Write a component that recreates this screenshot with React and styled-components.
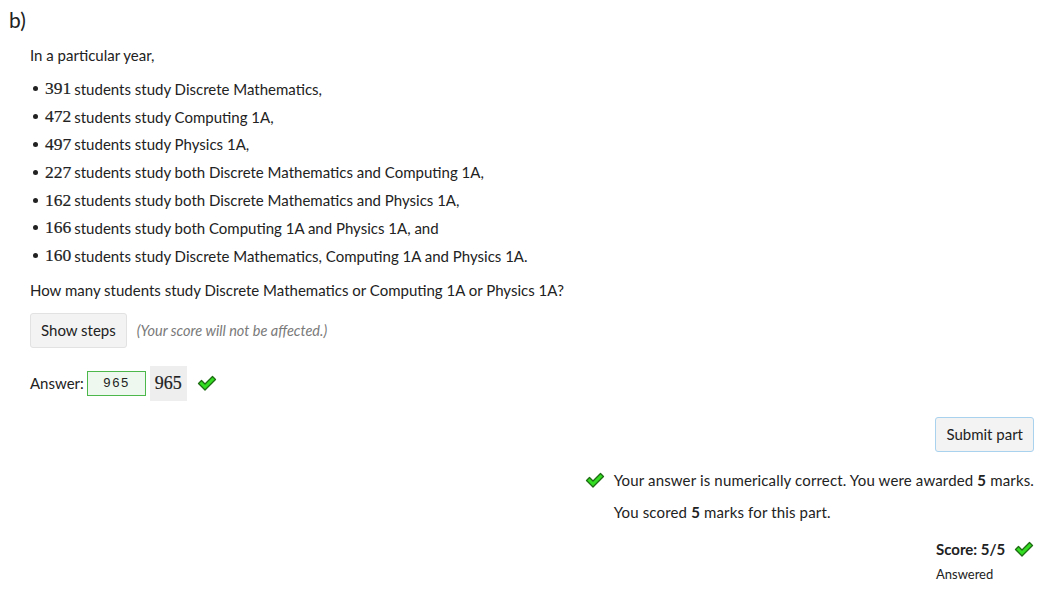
import styled, { createGlobalStyle } from "styled-components";

const GlobalStyle = createGlobalStyle`
  body {
    margin: 0;
    background: #fff;
    font-family: "Lato", "Open Sans", sans-serif;
    color: #222;
  }
`;

const Part = styled.div`
  padding: 6px 12px 0 9px;
  width: 1046px;
  box-sizing: border-box;
`;

const PartTitle = styled.h2`
  margin: 0;
  font-size: 21px;
  font-weight: 400;
  line-height: 28px;
`;

const Content = styled.div`
  padding-left: 21px;
  font-size: 15px;
`;

const Prompt = styled.p`
  margin: 9px 0 8px;
  line-height: 24px;
`;

const List = styled.ul`
  list-style: none;
  margin: 0;
  padding: 0;
`;

const Item = styled.li`
  display: flex;
  align-items: center;
  height: 27.8px;
`;

const Bullet = styled.span`
  width: 5px;
  height: 5px;
  border-radius: 50%;
  background: #222;
  margin: 0 7px 0 3px;
`;

const Num = styled.span`
  font-family: "Liberation Serif", "DejaVu Serif", serif;
  font-size: 17.5px;
  margin-right: 3px;
  -webkit-text-stroke: 0.2px #222;
`;

const Question = styled.p`
  margin: 8px 0 0;
  line-height: 24px;
`;

const StepsRow = styled.div`
  display: flex;
  align-items: center;
  gap: 10px;
  margin-top: 11px;
`;

const Button = styled.button`
  font-family: inherit;
  font-size: 15px;
  color: #222;
  background: #f3f3f3;
  border: 1px solid ${(p) => (p.$primary ? "#a9d2ef" : "#e2e2e2")};
  border-radius: 3px;
  height: 35px;
  padding: 0 10px;
`;

const Note = styled.span`
  font-style: italic;
  font-size: 14.5px;
  color: #7a7a7a;
`;

const AnswerRow = styled.div`
  display: flex;
  align-items: center;
  margin-top: 18px;
`;

const Label = styled.span`
  margin-right: 3px;
`;

const Input = styled.div`
  width: 59px;
  height: 25px;
  box-sizing: border-box;
  border: 1px solid #4cb84c;
  background: #eef8ee;
  font-family: "Liberation Mono", "DejaVu Sans Mono", monospace;
  font-size: 13px;
  letter-spacing: 1px;
  display: flex;
  align-items: center;
  justify-content: center;
`;

const Preview = styled.span`
  margin-left: 4px;
  background: #eeeeee;
  height: 35px;
  width: 37px;
  display: flex;
  align-items: center;
  justify-content: center;
  font-family: "Liberation Serif", "DejaVu Serif", serif;
  font-size: 18px;
  -webkit-text-stroke: 0.2px #222;
`;

const CheckWrap = styled.span`
  display: inline-flex;
  margin-left: ${(p) => p.$ml || 0}px;
  margin-right: ${(p) => p.$mr || 0}px;
`;

const Footer = styled.div`
  display: flex;
  flex-direction: column;
  align-items: flex-end;
  margin-top: 16px;
`;

const Feedback = styled.div`
  margin-top: 16px;
  display: flex;
  flex-direction: column;
  font-size: 15px;
  letter-spacing: 0.15px;
`;

const FeedbackLine = styled.div`
  display: flex;
  align-items: center;
  height: 24px;
  margin-left: ${(p) => (p.$indent ? 29 : 0)}px;
  margin-bottom: 8px;
`;

const ScoreBox = styled.div`
  margin-top: 5px;
  width: 98px;
  display: flex;
  flex-direction: column;
`;

const Score = styled.div`
  display: flex;
  align-items: center;
  justify-content: space-between;
  font-weight: 700;
  font-size: 15px;
  height: 24px;
`;

const Status = styled.div`
  font-size: 13px;
  margin-top: 5px;
`;

const Check = () => (
  <svg width="20" height="16" viewBox="0 0 20 16">
    <path
      d="M1.5 8.5 L4.5 5.5 L8 9 L15.5 1.5 L18.5 4.5 L8 15 Z"
      fill="#33dd22"
      stroke="#1d6b12"
      strokeWidth="1.3"
      strokeLinejoin="round"
    />
  </svg>
);

const items = [
  ["391", "students study Discrete Mathematics,"],
  ["472", "students study Computing 1A,"],
  ["497", "students study Physics 1A,"],
  ["227", "students study both Discrete Mathematics and Computing 1A,"],
  ["162", "students study both Discrete Mathematics and Physics 1A,"],
  ["166", "students study both Computing 1A and Physics 1A, and"],
  ["160", "students study Discrete Mathematics, Computing 1A and Physics 1A."],
];

export default function App() {
  return (
    <>
      <GlobalStyle />
      <Part>
        <PartTitle>b)</PartTitle>
        <Content>
          <Prompt>In a particular year,</Prompt>
          <List>
            {items.map(([n, t]) => (
              <Item key={n}>
                <Bullet />
                <Num>{n}</Num>
                {t}
              </Item>
            ))}
          </List>
          <Question>
            How many students study Discrete Mathematics or Computing 1A or Physics 1A?
          </Question>
          <StepsRow>
            <Button>Show steps</Button>
            <Note>(Your score will not be affected.)</Note>
          </StepsRow>
          <AnswerRow>
            <Label>Answer:</Label>
            <Input>965</Input>
            <Preview>965</Preview>
            <CheckWrap $ml={10}>
              <Check />
            </CheckWrap>
          </AnswerRow>
          <Footer>
            <Button $primary>Submit part</Button>
            <Feedback>
              <FeedbackLine>
                <CheckWrap $mr={9}>
                  <Check />
                </CheckWrap>
                Your answer is numerically correct. You were awarded&nbsp;<b>5</b>&nbsp;marks.
              </FeedbackLine>
              <FeedbackLine $indent>
                You scored&nbsp;<b>5</b>&nbsp;marks for this part.
              </FeedbackLine>
            </Feedback>
            <ScoreBox>
              <Score>
                Score: 5/5
                <Check />
              </Score>
              <Status>Answered</Status>
            </ScoreBox>
          </Footer>
        </Content>
      </Part>
    </>
  );
}
